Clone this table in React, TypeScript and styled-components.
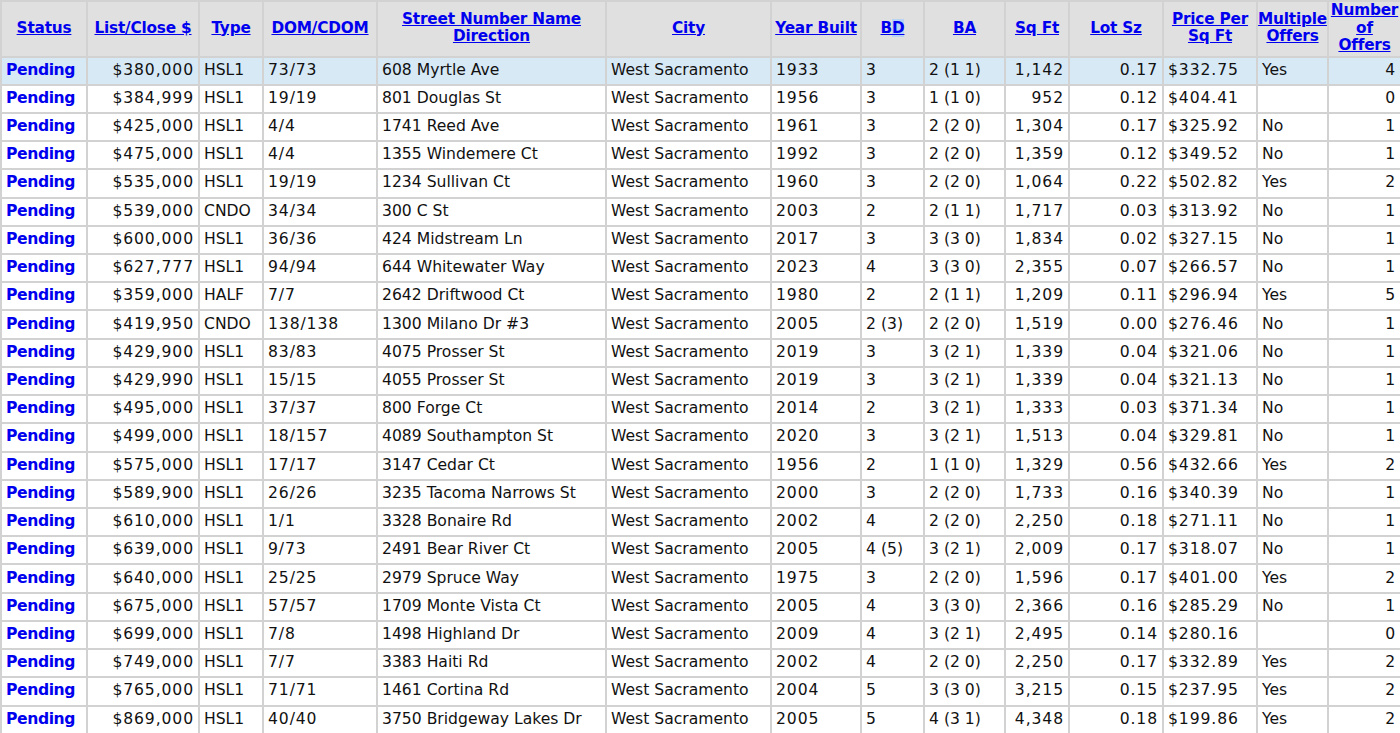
import React from "react";
import styled, { createGlobalStyle } from "styled-components";

const GlobalStyle = createGlobalStyle`
  html, body {
    margin: 0;
    padding: 0;
    background: #ffffff;
    overflow: hidden;
  }
  body {
    font-family: "DejaVu Sans", Verdana, sans-serif;
  }
`;

type Align = "left" | "right" | "center";

interface ColumnDef {
  key: string;
  label: React.ReactNode;
  width: number;
  align: Align;
}

const columns: ColumnDef[] = [
  { key: "status", label: "Status", width: 84, align: "left" },
  { key: "price", label: "List/Close $", width: 110, align: "right" },
  { key: "type", label: "Type", width: 62, align: "left" },
  { key: "dom", label: "DOM/CDOM", width: 112, align: "left" },
  { key: "street", label: "Street Number Name Direction", width: 227, align: "left" },
  { key: "city", label: "City", width: 163, align: "left" },
  { key: "year", label: "Year Built", width: 88, align: "left" },
  { key: "bd", label: "BD", width: 61, align: "left" },
  { key: "ba", label: "BA", width: 79, align: "left" },
  { key: "sqft", label: "Sq Ft", width: 62, align: "right" },
  { key: "lot", label: "Lot Sz", width: 92, align: "right" },
  { key: "ppsf", label: "Price Per Sq Ft", width: 92, align: "left" },
  { key: "multi", label: "Multiple Offers", width: 69, align: "left" },
  { key: "offers", label: "Number of Offers", width: 71, align: "right" },
];

type Row = [string, string, string, string, string, string, string, string, string, string, string, string];

const rows: Row[] = [
  ["$380,000", "HSL1", "73/73", "608 Myrtle Ave", "1933", "3", "2 (1 1)", "1,142", "0.17", "$332.75", "Yes", "4"],
  ["$384,999", "HSL1", "19/19", "801 Douglas St", "1956", "3", "1 (1 0)", "952", "0.12", "$404.41", "", "0"],
  ["$425,000", "HSL1", "4/4", "1741 Reed Ave", "1961", "3", "2 (2 0)", "1,304", "0.17", "$325.92", "No", "1"],
  ["$475,000", "HSL1", "4/4", "1355 Windemere Ct", "1992", "3", "2 (2 0)", "1,359", "0.12", "$349.52", "No", "1"],
  ["$535,000", "HSL1", "19/19", "1234 Sullivan Ct", "1960", "3", "2 (2 0)", "1,064", "0.22", "$502.82", "Yes", "2"],
  ["$539,000", "CNDO", "34/34", "300 C St", "2003", "2", "2 (1 1)", "1,717", "0.03", "$313.92", "No", "1"],
  ["$600,000", "HSL1", "36/36", "424 Midstream Ln", "2017", "3", "3 (3 0)", "1,834", "0.02", "$327.15", "No", "1"],
  ["$627,777", "HSL1", "94/94", "644 Whitewater Way", "2023", "4", "3 (3 0)", "2,355", "0.07", "$266.57", "No", "1"],
  ["$359,000", "HALF", "7/7", "2642 Driftwood Ct", "1980", "2", "2 (1 1)", "1,209", "0.11", "$296.94", "Yes", "5"],
  ["$419,950", "CNDO", "138/138", "1300 Milano Dr #3", "2005", "2 (3)", "2 (2 0)", "1,519", "0.00", "$276.46", "No", "1"],
  ["$429,900", "HSL1", "83/83", "4075 Prosser St", "2019", "3", "3 (2 1)", "1,339", "0.04", "$321.06", "No", "1"],
  ["$429,990", "HSL1", "15/15", "4055 Prosser St", "2019", "3", "3 (2 1)", "1,339", "0.04", "$321.13", "No", "1"],
  ["$495,000", "HSL1", "37/37", "800 Forge Ct", "2014", "2", "3 (2 1)", "1,333", "0.03", "$371.34", "No", "1"],
  ["$499,000", "HSL1", "18/157", "4089 Southampton St", "2020", "3", "3 (2 1)", "1,513", "0.04", "$329.81", "No", "1"],
  ["$575,000", "HSL1", "17/17", "3147 Cedar Ct", "1956", "2", "1 (1 0)", "1,329", "0.56", "$432.66", "Yes", "2"],
  ["$589,900", "HSL1", "26/26", "3235 Tacoma Narrows St", "2000", "3", "2 (2 0)", "1,733", "0.16", "$340.39", "No", "1"],
  ["$610,000", "HSL1", "1/1", "3328 Bonaire Rd", "2002", "4", "2 (2 0)", "2,250", "0.18", "$271.11", "No", "1"],
  ["$639,000", "HSL1", "9/73", "2491 Bear River Ct", "2005", "4 (5)", "3 (2 1)", "2,009", "0.17", "$318.07", "No", "1"],
  ["$640,000", "HSL1", "25/25", "2979 Spruce Way", "1975", "3", "2 (2 0)", "1,596", "0.17", "$401.00", "Yes", "2"],
  ["$675,000", "HSL1", "57/57", "1709 Monte Vista Ct", "2005", "4", "3 (3 0)", "2,366", "0.16", "$285.29", "No", "1"],
  ["$699,000", "HSL1", "7/8", "1498 Highland Dr", "2009", "4", "3 (2 1)", "2,495", "0.14", "$280.16", "", "0"],
  ["$749,000", "HSL1", "7/7", "3383 Haiti Rd", "2002", "4", "2 (2 0)", "2,250", "0.17", "$332.89", "Yes", "2"],
  ["$765,000", "HSL1", "71/71", "1461 Cortina Rd", "2004", "5", "3 (3 0)", "3,215", "0.15", "$237.95", "Yes", "2"],
  ["$869,000", "HSL1", "40/40", "3750 Bridgeway Lakes Dr", "2005", "5", "4 (3 1)", "4,348", "0.18", "$199.86", "Yes", "2"],
];

const Table = styled.table`
  border-collapse: separate;
  border-spacing: 2px;
  background: #d2d2d2;
  table-layout: fixed;
  width: 1402px;
  margin: 0;
  font-family: "DejaVu Sans", Verdana, sans-serif;
`;

const Col = styled.col<{ $w: number }>`
  width: ${(p) => p.$w}px;
`;

const HeadCell = styled.th`
  box-sizing: border-box;
  height: 53px;
  padding: 0 0 1px 0;
  background: #e0e0e0;
  text-align: center;
  vertical-align: middle;
  font-size: 15.3px;
  font-weight: bold;
  line-height: 17.5px;
  letter-spacing: -0.2px;
`;

const SortLink = styled.a`
  color: #0000ee;
  text-decoration: underline;
  cursor: pointer;
`;

const Selected = styled.span`
  background: #b9d4f2;
`;

const BodyRow = styled.tr<{ $highlight?: boolean }>`
  background: ${(p) => (p.$highlight ? "#d8e9f6" : "#ffffff")};
`;

const Cell = styled.td<{ $align: Align }>`
  box-sizing: border-box;
  height: 26.22px;
  padding: 0 4px 2px 4px;
  text-align: ${(p) => p.$align};
  vertical-align: middle;
  font-size: 15.6px;
  line-height: 18px;
  color: #111111;
  white-space: nowrap;
  overflow: hidden;
`;

const StatusText = styled.span`
  color: #0000ee;
  font-weight: bold;
  letter-spacing: -0.4px;
`;

const Numeric = styled.span`
  letter-spacing: 0.9px;
`;

const numericKeys = new Set(["price", "dom", "year", "sqft", "lot", "ppsf", "offers"]);

export default function App() {
  return (
    <>
      <GlobalStyle />
      <Table>
        <colgroup>
          {columns.map((c) => (
            <Col key={c.key} $w={c.width} />
          ))}
        </colgroup>
        <thead>
          <tr>
            {columns.map((c) => (
              <HeadCell key={c.key}>
                <SortLink>
                  {c.key === "bd" ? (
                    <>
                      B<Selected>D</Selected>
                    </>
                  ) : (
                    c.label
                  )}
                </SortLink>
              </HeadCell>
            ))}
          </tr>
        </thead>
        <tbody>
          {rows.map((r, i) => {
            const values: Record<string, string> = {
              price: r[0],
              type: r[1],
              dom: r[2],
              street: r[3],
              city: "West Sacramento",
              year: r[4],
              bd: r[5],
              ba: r[6],
              sqft: r[7],
              lot: r[8],
              ppsf: r[9],
              multi: r[10],
              offers: r[11],
            };
            return (
              <BodyRow key={i} $highlight={i === 0}>
                {columns.map((c) => (
                  <Cell key={c.key} $align={c.align}>
                    {c.key === "status" ? (
                      <StatusText>Pending</StatusText>
                    ) : numericKeys.has(c.key) ? (
                      <Numeric>{values[c.key]}</Numeric>
                    ) : (
                      values[c.key]
                    )}
                  </Cell>
                ))}
              </BodyRow>
            );
          })}
        </tbody>
      </Table>
    </>
  );
}
